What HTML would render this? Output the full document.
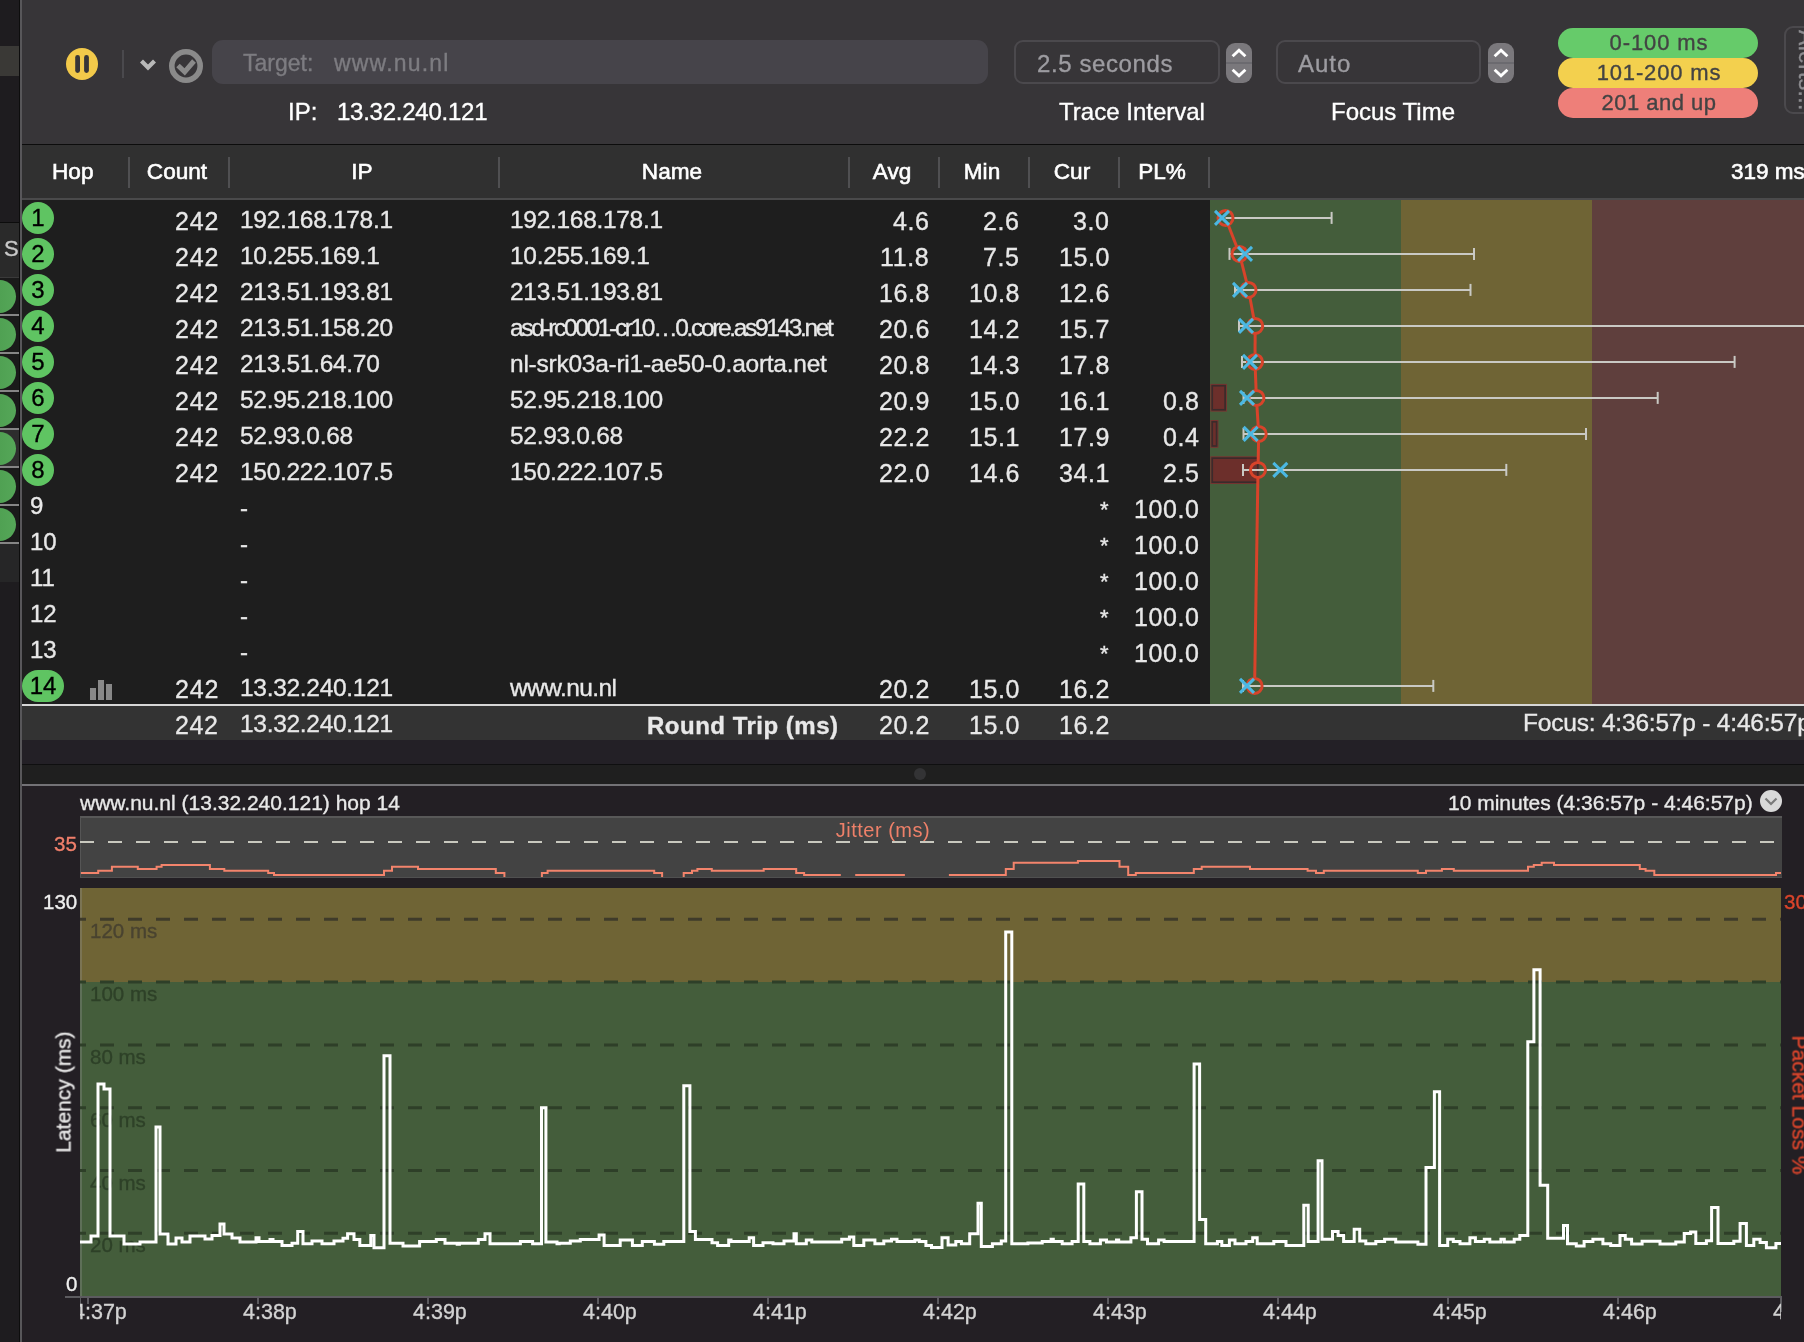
<!DOCTYPE html>
<html><head><meta charset="utf-8"><title>PingPlotter</title>
<style>
html,body{margin:0;padding:0;}
body{width:1804px;height:1342px;position:relative;overflow:hidden;background:#1e1c1f;font-family:"Liberation Sans", sans-serif;}
.r{position:absolute;}
.t{position:absolute;white-space:nowrap;line-height:1;-webkit-text-stroke-width:0.35px;will-change:transform;}
svg{position:absolute;}
</style></head><body>
<div class="r" style="left:0px;top:0px;width:19px;height:1342px;background:#1e1c1f;"></div>
<div class="r" style="left:0px;top:46px;width:19px;height:30px;background:#3a3936;"></div>
<div class="r" style="left:0px;top:222px;width:19px;height:1px;background:#0c0c0c;"></div>
<div class="r" style="left:0px;top:223px;width:19px;height:54px;background:#2a2a2a;"></div>
<div class="r" style="left:0px;top:276.5px;width:19px;height:1.5px;background:#3a3a3a;"></div>
<div class="r" style="left:0px;top:278px;width:19px;height:265px;background:#1a1a1a;"></div>
<div class="r" style="left:0px;top:429px;width:19px;height:38px;background:#2d2d2d;"></div>
<div class="r" style="left:0px;top:543px;width:19px;height:39px;background:#262627;"></div>
<div class="r" style="left:-18px;top:279.7px;width:33.6px;height:33.6px;border-radius:50%;background:linear-gradient(90deg,#4a9a4d,#55a758);"></div>
<div class="r" style="left:0px;top:314px;width:19px;height:1.6px;background:#858585;"></div>
<div class="r" style="left:-18px;top:317.7px;width:33.6px;height:33.6px;border-radius:50%;background:linear-gradient(90deg,#4a9a4d,#55a758);"></div>
<div class="r" style="left:0px;top:352px;width:19px;height:1.6px;background:#858585;"></div>
<div class="r" style="left:-18px;top:355.7px;width:33.6px;height:33.6px;border-radius:50%;background:linear-gradient(90deg,#4a9a4d,#55a758);"></div>
<div class="r" style="left:0px;top:390px;width:19px;height:1.6px;background:#858585;"></div>
<div class="r" style="left:-18px;top:393.7px;width:33.6px;height:33.6px;border-radius:50%;background:linear-gradient(90deg,#4a9a4d,#55a758);"></div>
<div class="r" style="left:0px;top:428px;width:19px;height:1.6px;background:#858585;"></div>
<div class="r" style="left:-18px;top:431.7px;width:33.6px;height:33.6px;border-radius:50%;background:linear-gradient(90deg,#4a9a4d,#55a758);"></div>
<div class="r" style="left:0px;top:466px;width:19px;height:1.6px;background:#858585;"></div>
<div class="r" style="left:-18px;top:469.7px;width:33.6px;height:33.6px;border-radius:50%;background:linear-gradient(90deg,#4a9a4d,#55a758);"></div>
<div class="r" style="left:0px;top:504px;width:19px;height:1.6px;background:#858585;"></div>
<div class="r" style="left:-18px;top:507.7px;width:33.6px;height:33.6px;border-radius:50%;background:linear-gradient(90deg,#4a9a4d,#55a758);"></div>
<div class="r" style="left:0px;top:542px;width:19px;height:1.6px;background:#858585;"></div>
<div class="t" style="left:4px;top:238px;font-size:22px;color:#c8c8c8;">S</div>
<div class="r" style="left:19px;top:0px;width:1px;height:1342px;background:#0d0d0d;"></div>
<div class="r" style="left:20px;top:0px;width:2px;height:1342px;background:#58575a;"></div>
<div class="r" style="left:22px;top:0px;width:1782px;height:144px;background:#373538;"></div>
<div class="r" style="left:22px;top:143.5px;width:1782px;height:1.8px;background:#0c0c0c;"></div>
<svg style="left:60px;top:42px" width="44" height="44" viewBox="0 0 44 44"><circle cx="22" cy="22" r="16" fill="#f2c94a"/><rect x="15.2" y="13" width="4.8" height="18" rx="2.4" fill="#373538"/><rect x="24.1" y="13" width="4.8" height="18" rx="2.4" fill="#373538"/></svg>
<div class="r" style="left:122px;top:50px;width:2px;height:28px;background:#4a494d;"></div>
<svg style="left:136px;top:54px" width="24" height="20" viewBox="0 0 24 20"><path d="M5.5 7 L12 13.5 L18.5 7" fill="none" stroke="#b8b8b8" stroke-width="4.2" stroke-linecap="butt" stroke-linejoin="miter"/></svg>
<svg style="left:166px;top:46px" width="40" height="40" viewBox="0 0 40 40"><circle cx="20" cy="20" r="14.2" fill="none" stroke="#8a8a8a" stroke-width="5.6"/><path d="M12 19.5 L18.7 25.8 L28 15" fill="none" stroke="#8a8a8a" stroke-width="5"/></svg>
<div class="r" style="left:212px;top:40px;width:776px;height:44px;background:#46444a;border-radius:11px;"></div>
<div class="t" style="top:52.0px;font-size:23px;color:#7d7c81;left:243px;">Target:</div>
<div class="t" style="top:52.0px;font-size:23px;color:#7d7c81;letter-spacing:1.2px;left:334px;">www.nu.nl</div>
<div class="t" style="top:99.7px;font-size:24px;color:#ffffff;left:288px;">IP:</div>
<div class="t" style="top:99.7px;font-size:24px;color:#ffffff;letter-spacing:-0.25px;left:337px;">13.32.240.121</div>
<div class="r" style="left:1014px;top:40px;width:206px;height:44px;background:transparent;box-sizing:border-box;border:2px solid #4b494d;border-radius:9px;"></div>
<div class="t" style="top:51.7px;font-size:24px;color:#9d9ca1;letter-spacing:0.6px;left:1037px;">2.5 seconds</div>
<svg style="left:1226px;top:43px" width="26" height="40" viewBox="0 0 26 40"><rect x="0" y="0" width="26" height="40" rx="9" fill="#7a787c"/><rect x="0" y="19.3" width="26" height="1.4" fill="#66646a"/><path d="M6.6 13.2 L13 7.2 L19.4 13.2" fill="none" stroke="#fff" stroke-width="2.9"/><path d="M6.6 26.8 L13 32.8 L19.4 26.8" fill="none" stroke="#fff" stroke-width="2.9"/></svg>
<div class="t" style="top:99.7px;font-size:24px;color:#ffffff;left:1132px;transform:translateX(-50%);">Trace Interval</div>
<div class="r" style="left:1276px;top:40px;width:205px;height:44px;background:transparent;box-sizing:border-box;border:2px solid #4b494d;border-radius:9px;"></div>
<div class="t" style="top:51.7px;font-size:24px;color:#9d9ca1;letter-spacing:1px;left:1298px;">Auto</div>
<svg style="left:1488px;top:43px" width="26" height="40" viewBox="0 0 26 40"><rect x="0" y="0" width="26" height="40" rx="9" fill="#7a787c"/><rect x="0" y="19.3" width="26" height="1.4" fill="#66646a"/><path d="M6.6 13.2 L13 7.2 L19.4 13.2" fill="none" stroke="#fff" stroke-width="2.9"/><path d="M6.6 26.8 L13 32.8 L19.4 26.8" fill="none" stroke="#fff" stroke-width="2.9"/></svg>
<div class="t" style="top:99.7px;font-size:24px;color:#ffffff;left:1393px;transform:translateX(-50%);">Focus Time</div>
<div class="r" style="left:1558px;top:28px;width:200px;height:30px;background:#66cb6a;border-radius:15px;"></div>
<div class="r" style="left:1558px;top:58px;width:200px;height:30px;background:#f3d04e;border-radius:15px;"></div>
<div class="r" style="left:1558px;top:88px;width:200px;height:30px;background:#ee7f79;border-radius:15px;"></div>
<div class="t" style="top:32.4px;font-size:22px;color:#434343;letter-spacing:0.9px;left:1658.5px;transform:translateX(-50%);">0-100 ms</div>
<div class="t" style="top:62.4px;font-size:22px;color:#434343;letter-spacing:0.85px;left:1658.5px;transform:translateX(-50%);">101-200 ms</div>
<div class="t" style="top:92.4px;font-size:22px;color:#434343;letter-spacing:0.5px;left:1658.5px;transform:translateX(-50%);">201 and up</div>
<div class="r" style="left:1784px;top:26px;width:40px;height:88px;background:transparent;box-sizing:border-box;border:2px solid #4b494d;border-radius:9px;"></div>
<div class="t" style="left:1818px;top:30px;font-size:23px;letter-spacing:0.3px;color:#8d8c90;transform-origin:0 0;transform:rotate(90deg);">Alerts...</div>
<div class="r" style="left:22px;top:145.3px;width:1782px;height:52.7px;background:#303030;"></div>
<div class="r" style="left:22px;top:198px;width:1782px;height:2px;background:#4a4a4b;"></div>
<div class="r" style="left:22px;top:200px;width:1782px;height:504px;background:#1e1e1e;"></div>
<div class="r" style="left:128px;top:156.5px;width:2px;height:31.5px;background:#505052;"></div>
<div class="r" style="left:228px;top:156.5px;width:2px;height:31.5px;background:#505052;"></div>
<div class="r" style="left:498px;top:156.5px;width:2px;height:31.5px;background:#505052;"></div>
<div class="r" style="left:848px;top:156.5px;width:2px;height:31.5px;background:#505052;"></div>
<div class="r" style="left:938px;top:156.5px;width:2px;height:31.5px;background:#505052;"></div>
<div class="r" style="left:1028px;top:156.5px;width:2px;height:31.5px;background:#505052;"></div>
<div class="r" style="left:1118px;top:156.5px;width:2px;height:31.5px;background:#505052;"></div>
<div class="r" style="left:1208px;top:156.5px;width:2px;height:31.5px;background:#505052;"></div>
<div class="t" style="top:161.2px;font-size:22.6px;color:#ffffff;left:52px;-webkit-text-stroke-width:0.6px;">Hop</div>
<div class="t" style="top:161.2px;font-size:22.6px;color:#ffffff;left:177px;transform:translateX(-50%);-webkit-text-stroke-width:0.6px;">Count</div>
<div class="t" style="top:161.2px;font-size:22.6px;color:#ffffff;left:362px;transform:translateX(-50%);-webkit-text-stroke-width:0.6px;">IP</div>
<div class="t" style="top:161.2px;font-size:22.6px;color:#ffffff;left:672px;transform:translateX(-50%);-webkit-text-stroke-width:0.6px;">Name</div>
<div class="t" style="top:161.2px;font-size:22.6px;color:#ffffff;left:892px;transform:translateX(-50%);-webkit-text-stroke-width:0.6px;">Avg</div>
<div class="t" style="top:161.2px;font-size:22.6px;color:#ffffff;left:982px;transform:translateX(-50%);-webkit-text-stroke-width:0.6px;">Min</div>
<div class="t" style="top:161.2px;font-size:22.6px;color:#ffffff;left:1072px;transform:translateX(-50%);-webkit-text-stroke-width:0.6px;">Cur</div>
<div class="t" style="top:161.2px;font-size:22.6px;color:#ffffff;left:1162px;transform:translateX(-50%);-webkit-text-stroke-width:0.6px;">PL%</div>
<div class="t" style="top:161.3px;font-size:22.5px;color:#ffffff;left:1730.5px;-webkit-text-stroke-width:0.6px;">319 ms</div>
<div class="r" style="left:22px;top:202px;width:32px;height:32px;border-radius:16px;background:#5fc462;"></div>
<div class="t" style="top:206.3px;font-size:24px;color:#000000;left:38.0px;transform:translateX(-50%);">1</div>
<div class="t" style="top:208.8px;font-size:25px;color:#e8e8e8;letter-spacing:0.8px;right:1584.7px;">242</div>
<div class="t" style="top:207.6px;font-size:24.5px;color:#e8e8e8;letter-spacing:-0.3px;left:240px;">192.168.178.1</div>
<div class="t" style="top:207.6px;font-size:24.5px;color:#e8e8e8;letter-spacing:-0.3px;left:510px;">192.168.178.1</div>
<div class="t" style="top:208.8px;font-size:25px;color:#e8e8e8;letter-spacing:0.6px;right:874.4px;">4.6</div>
<div class="t" style="top:208.8px;font-size:25px;color:#e8e8e8;letter-spacing:0.6px;right:784.4px;">2.6</div>
<div class="t" style="top:208.8px;font-size:25px;color:#e8e8e8;letter-spacing:0.6px;right:694.4px;">3.0</div>
<div class="r" style="left:22px;top:238px;width:32px;height:32px;border-radius:16px;background:#5fc462;"></div>
<div class="t" style="top:242.3px;font-size:24px;color:#000000;left:38.0px;transform:translateX(-50%);">2</div>
<div class="t" style="top:244.8px;font-size:25px;color:#e8e8e8;letter-spacing:0.8px;right:1584.7px;">242</div>
<div class="t" style="top:243.6px;font-size:24.5px;color:#e8e8e8;letter-spacing:-0.3px;left:240px;">10.255.169.1</div>
<div class="t" style="top:243.6px;font-size:24.5px;color:#e8e8e8;letter-spacing:-0.3px;left:510px;">10.255.169.1</div>
<div class="t" style="top:244.8px;font-size:25px;color:#e8e8e8;letter-spacing:0.6px;right:874.4px;">11.8</div>
<div class="t" style="top:244.8px;font-size:25px;color:#e8e8e8;letter-spacing:0.6px;right:784.4px;">7.5</div>
<div class="t" style="top:244.8px;font-size:25px;color:#e8e8e8;letter-spacing:0.6px;right:694.4px;">15.0</div>
<div class="r" style="left:22px;top:274px;width:32px;height:32px;border-radius:16px;background:#5fc462;"></div>
<div class="t" style="top:278.3px;font-size:24px;color:#000000;left:38.0px;transform:translateX(-50%);">3</div>
<div class="t" style="top:280.8px;font-size:25px;color:#e8e8e8;letter-spacing:0.8px;right:1584.7px;">242</div>
<div class="t" style="top:279.6px;font-size:24.5px;color:#e8e8e8;letter-spacing:-0.3px;left:240px;">213.51.193.81</div>
<div class="t" style="top:279.6px;font-size:24.5px;color:#e8e8e8;letter-spacing:-0.3px;left:510px;">213.51.193.81</div>
<div class="t" style="top:280.8px;font-size:25px;color:#e8e8e8;letter-spacing:0.6px;right:874.4px;">16.8</div>
<div class="t" style="top:280.8px;font-size:25px;color:#e8e8e8;letter-spacing:0.6px;right:784.4px;">10.8</div>
<div class="t" style="top:280.8px;font-size:25px;color:#e8e8e8;letter-spacing:0.6px;right:694.4px;">12.6</div>
<div class="r" style="left:22px;top:310px;width:32px;height:32px;border-radius:16px;background:#5fc462;"></div>
<div class="t" style="top:314.3px;font-size:24px;color:#000000;left:38.0px;transform:translateX(-50%);">4</div>
<div class="t" style="top:316.8px;font-size:25px;color:#e8e8e8;letter-spacing:0.8px;right:1584.7px;">242</div>
<div class="t" style="top:315.6px;font-size:24.5px;color:#e8e8e8;letter-spacing:-0.3px;left:240px;">213.51.158.20</div>
<div class="t" style="top:315.6px;font-size:24.5px;color:#e8e8e8;letter-spacing:-2.35px;left:510px;">asd-rc0001-cr10…0.core.as9143.net</div>
<div class="t" style="top:316.8px;font-size:25px;color:#e8e8e8;letter-spacing:0.6px;right:874.4px;">20.6</div>
<div class="t" style="top:316.8px;font-size:25px;color:#e8e8e8;letter-spacing:0.6px;right:784.4px;">14.2</div>
<div class="t" style="top:316.8px;font-size:25px;color:#e8e8e8;letter-spacing:0.6px;right:694.4px;">15.7</div>
<div class="r" style="left:22px;top:346px;width:32px;height:32px;border-radius:16px;background:#5fc462;"></div>
<div class="t" style="top:350.3px;font-size:24px;color:#000000;left:38.0px;transform:translateX(-50%);">5</div>
<div class="t" style="top:352.8px;font-size:25px;color:#e8e8e8;letter-spacing:0.8px;right:1584.7px;">242</div>
<div class="t" style="top:351.6px;font-size:24.5px;color:#e8e8e8;letter-spacing:-0.3px;left:240px;">213.51.64.70</div>
<div class="t" style="top:351.6px;font-size:24.5px;color:#e8e8e8;letter-spacing:-0.25px;left:510px;">nl-srk03a-ri1-ae50-0.aorta.net</div>
<div class="t" style="top:352.8px;font-size:25px;color:#e8e8e8;letter-spacing:0.6px;right:874.4px;">20.8</div>
<div class="t" style="top:352.8px;font-size:25px;color:#e8e8e8;letter-spacing:0.6px;right:784.4px;">14.3</div>
<div class="t" style="top:352.8px;font-size:25px;color:#e8e8e8;letter-spacing:0.6px;right:694.4px;">17.8</div>
<div class="r" style="left:22px;top:382px;width:32px;height:32px;border-radius:16px;background:#5fc462;"></div>
<div class="t" style="top:386.3px;font-size:24px;color:#000000;left:38.0px;transform:translateX(-50%);">6</div>
<div class="t" style="top:388.8px;font-size:25px;color:#e8e8e8;letter-spacing:0.8px;right:1584.7px;">242</div>
<div class="t" style="top:387.6px;font-size:24.5px;color:#e8e8e8;letter-spacing:-0.3px;left:240px;">52.95.218.100</div>
<div class="t" style="top:387.6px;font-size:24.5px;color:#e8e8e8;letter-spacing:-0.3px;left:510px;">52.95.218.100</div>
<div class="t" style="top:388.8px;font-size:25px;color:#e8e8e8;letter-spacing:0.6px;right:874.4px;">20.9</div>
<div class="t" style="top:388.8px;font-size:25px;color:#e8e8e8;letter-spacing:0.6px;right:784.4px;">15.0</div>
<div class="t" style="top:388.8px;font-size:25px;color:#e8e8e8;letter-spacing:0.6px;right:694.4px;">16.1</div>
<div class="t" style="top:388.8px;font-size:25px;color:#e8e8e8;letter-spacing:0.6px;right:604.4px;">0.8</div>
<div class="r" style="left:22px;top:418px;width:32px;height:32px;border-radius:16px;background:#5fc462;"></div>
<div class="t" style="top:422.3px;font-size:24px;color:#000000;left:38.0px;transform:translateX(-50%);">7</div>
<div class="t" style="top:424.8px;font-size:25px;color:#e8e8e8;letter-spacing:0.8px;right:1584.7px;">242</div>
<div class="t" style="top:423.6px;font-size:24.5px;color:#e8e8e8;letter-spacing:-0.3px;left:240px;">52.93.0.68</div>
<div class="t" style="top:423.6px;font-size:24.5px;color:#e8e8e8;letter-spacing:-0.3px;left:510px;">52.93.0.68</div>
<div class="t" style="top:424.8px;font-size:25px;color:#e8e8e8;letter-spacing:0.6px;right:874.4px;">22.2</div>
<div class="t" style="top:424.8px;font-size:25px;color:#e8e8e8;letter-spacing:0.6px;right:784.4px;">15.1</div>
<div class="t" style="top:424.8px;font-size:25px;color:#e8e8e8;letter-spacing:0.6px;right:694.4px;">17.9</div>
<div class="t" style="top:424.8px;font-size:25px;color:#e8e8e8;letter-spacing:0.6px;right:604.4px;">0.4</div>
<div class="r" style="left:22px;top:454px;width:32px;height:32px;border-radius:16px;background:#5fc462;"></div>
<div class="t" style="top:458.3px;font-size:24px;color:#000000;left:38.0px;transform:translateX(-50%);">8</div>
<div class="t" style="top:460.8px;font-size:25px;color:#e8e8e8;letter-spacing:0.8px;right:1584.7px;">242</div>
<div class="t" style="top:459.6px;font-size:24.5px;color:#e8e8e8;letter-spacing:-0.3px;left:240px;">150.222.107.5</div>
<div class="t" style="top:459.6px;font-size:24.5px;color:#e8e8e8;letter-spacing:-0.3px;left:510px;">150.222.107.5</div>
<div class="t" style="top:460.8px;font-size:25px;color:#e8e8e8;letter-spacing:0.6px;right:874.4px;">22.0</div>
<div class="t" style="top:460.8px;font-size:25px;color:#e8e8e8;letter-spacing:0.6px;right:784.4px;">14.6</div>
<div class="t" style="top:460.8px;font-size:25px;color:#e8e8e8;letter-spacing:0.6px;right:694.4px;">34.1</div>
<div class="t" style="top:460.8px;font-size:25px;color:#e8e8e8;letter-spacing:0.6px;right:604.4px;">2.5</div>
<div class="t" style="top:494.3px;font-size:24px;color:#e8e8e8;left:30px;">9</div>
<div class="t" style="top:496.0px;font-size:24px;color:#e8e8e8;left:240px;">-</div>
<div class="t" style="top:498.9px;font-size:22px;color:#e8e8e8;right:695px;">*</div>
<div class="t" style="top:496.8px;font-size:25px;color:#e8e8e8;letter-spacing:0.6px;right:604.4px;">100.0</div>
<div class="t" style="top:530.3px;font-size:24px;color:#e8e8e8;left:30px;">10</div>
<div class="t" style="top:532.0px;font-size:24px;color:#e8e8e8;left:240px;">-</div>
<div class="t" style="top:534.9px;font-size:22px;color:#e8e8e8;right:695px;">*</div>
<div class="t" style="top:532.8px;font-size:25px;color:#e8e8e8;letter-spacing:0.6px;right:604.4px;">100.0</div>
<div class="t" style="top:566.3px;font-size:24px;color:#e8e8e8;left:30px;">11</div>
<div class="t" style="top:568.0px;font-size:24px;color:#e8e8e8;left:240px;">-</div>
<div class="t" style="top:570.9px;font-size:22px;color:#e8e8e8;right:695px;">*</div>
<div class="t" style="top:568.8px;font-size:25px;color:#e8e8e8;letter-spacing:0.6px;right:604.4px;">100.0</div>
<div class="t" style="top:602.3px;font-size:24px;color:#e8e8e8;left:30px;">12</div>
<div class="t" style="top:604.0px;font-size:24px;color:#e8e8e8;left:240px;">-</div>
<div class="t" style="top:606.9px;font-size:22px;color:#e8e8e8;right:695px;">*</div>
<div class="t" style="top:604.8px;font-size:25px;color:#e8e8e8;letter-spacing:0.6px;right:604.4px;">100.0</div>
<div class="t" style="top:638.3px;font-size:24px;color:#e8e8e8;left:30px;">13</div>
<div class="t" style="top:640.0px;font-size:24px;color:#e8e8e8;left:240px;">-</div>
<div class="t" style="top:642.9px;font-size:22px;color:#e8e8e8;right:695px;">*</div>
<div class="t" style="top:640.8px;font-size:25px;color:#e8e8e8;letter-spacing:0.6px;right:604.4px;">100.0</div>
<div class="r" style="left:22px;top:670px;width:42px;height:32px;border-radius:16px;background:#5fc462;"></div>
<div class="t" style="top:674.3px;font-size:24px;color:#000000;left:43.0px;transform:translateX(-50%);">14</div>
<div class="t" style="top:676.8px;font-size:25px;color:#e8e8e8;letter-spacing:0.8px;right:1584.7px;">242</div>
<div class="t" style="top:675.6px;font-size:24.5px;color:#e8e8e8;letter-spacing:-0.3px;left:240px;">13.32.240.121</div>
<div class="t" style="top:675.6px;font-size:24.5px;color:#e8e8e8;letter-spacing:-0.6px;left:510px;">www.nu.nl</div>
<div class="t" style="top:676.8px;font-size:25px;color:#e8e8e8;letter-spacing:0.6px;right:874.4px;">20.2</div>
<div class="t" style="top:676.8px;font-size:25px;color:#e8e8e8;letter-spacing:0.6px;right:784.4px;">15.0</div>
<div class="t" style="top:676.8px;font-size:25px;color:#e8e8e8;letter-spacing:0.6px;right:694.4px;">16.2</div>
<div class="r" style="left:89.8px;top:688px;width:6px;height:12px;background:#888888;"></div>
<div class="r" style="left:98.2px;top:680px;width:6px;height:20px;background:#888888;"></div>
<div class="r" style="left:106.2px;top:684px;width:6px;height:16px;background:#888888;"></div>
<div class="r" style="left:1210px;top:200px;width:191px;height:504px;background:#445d3b;"></div>
<div class="r" style="left:1401px;top:200px;width:191px;height:504px;background:#6f6435;"></div>
<div class="r" style="left:1592px;top:200px;width:212px;height:504px;background:#5f3f3d;"></div>
<svg style="left:0;top:0" width="1804" height="1342" viewBox="0 0 1804 1342"><rect x="1210.4" y="383.9" width="16.5" height="27.7" fill="#773430"/><rect x="1212.2" y="385.7" width="12.9" height="24.1" fill="#6c2f2b" stroke="#3b2b2b" stroke-width="1.7"/><rect x="1210.4" y="420" width="8.0" height="27.8" fill="#773430"/><rect x="1212.2" y="421.8" width="4.4" height="24.2" fill="#6c2f2b" stroke="#3b2b2b" stroke-width="1.7"/><rect x="1210.4" y="456.3" width="49.2" height="27.7" fill="#773430"/><rect x="1212.2" y="458.1" width="45.6" height="24.1" fill="#6c2f2b" stroke="#3b2b2b" stroke-width="1.7"/><line x1="1225.5" y1="217.9" x2="1331.6" y2="217.9" stroke="#c9c9c4" stroke-width="2"/><line x1="1331.6" y1="211.9" x2="1331.6" y2="223.9" stroke="#c9c9c4" stroke-width="2"/><line x1="1229.5" y1="253.9" x2="1474" y2="253.9" stroke="#c9c9c4" stroke-width="2"/><line x1="1229.5" y1="247.9" x2="1229.5" y2="259.9" stroke="#c9c9c4" stroke-width="2"/><line x1="1474" y1="247.9" x2="1474" y2="259.9" stroke="#c9c9c4" stroke-width="2"/><line x1="1235" y1="289.9" x2="1470.5" y2="289.9" stroke="#c9c9c4" stroke-width="2"/><line x1="1235" y1="283.9" x2="1235" y2="295.9" stroke="#c9c9c4" stroke-width="2"/><line x1="1470.5" y1="283.9" x2="1470.5" y2="295.9" stroke="#c9c9c4" stroke-width="2"/><line x1="1239" y1="325.9" x2="1810" y2="325.9" stroke="#c9c9c4" stroke-width="2"/><line x1="1239" y1="319.9" x2="1239" y2="331.9" stroke="#c9c9c4" stroke-width="2"/><line x1="1810" y1="319.9" x2="1810" y2="331.9" stroke="#c9c9c4" stroke-width="2"/><line x1="1242" y1="361.9" x2="1734.6" y2="361.9" stroke="#c9c9c4" stroke-width="2"/><line x1="1242" y1="355.9" x2="1242" y2="367.9" stroke="#c9c9c4" stroke-width="2"/><line x1="1734.6" y1="355.9" x2="1734.6" y2="367.9" stroke="#c9c9c4" stroke-width="2"/><line x1="1243.5" y1="397.9" x2="1657.7" y2="397.9" stroke="#c9c9c4" stroke-width="2"/><line x1="1243.5" y1="391.9" x2="1243.5" y2="403.9" stroke="#c9c9c4" stroke-width="2"/><line x1="1657.7" y1="391.9" x2="1657.7" y2="403.9" stroke="#c9c9c4" stroke-width="2"/><line x1="1243.5" y1="433.9" x2="1586" y2="433.9" stroke="#c9c9c4" stroke-width="2"/><line x1="1243.5" y1="427.9" x2="1243.5" y2="439.9" stroke="#c9c9c4" stroke-width="2"/><line x1="1586" y1="427.9" x2="1586" y2="439.9" stroke="#c9c9c4" stroke-width="2"/><line x1="1243" y1="469.9" x2="1506.3" y2="469.9" stroke="#c9c9c4" stroke-width="2"/><line x1="1243" y1="463.9" x2="1243" y2="475.9" stroke="#c9c9c4" stroke-width="2"/><line x1="1506.3" y1="463.9" x2="1506.3" y2="475.9" stroke="#c9c9c4" stroke-width="2"/><line x1="1243" y1="685.9" x2="1433.3" y2="685.9" stroke="#c9c9c4" stroke-width="2"/><line x1="1243" y1="679.9" x2="1243" y2="691.9" stroke="#c9c9c4" stroke-width="2"/><line x1="1433.3" y1="679.9" x2="1433.3" y2="691.9" stroke="#c9c9c4" stroke-width="2"/><line x1="1228.47" y1="225.54" x2="1236.53" y2="246.26" stroke="#d8432a" stroke-width="3"/><line x1="1241.49" y1="261.86" x2="1246.51" y2="281.94" stroke="#d8432a" stroke-width="3"/><line x1="1250.00" y1="297.96" x2="1253.70" y2="317.84" stroke="#d8432a" stroke-width="3"/><line x1="1255.15" y1="334.10" x2="1255.05" y2="353.70" stroke="#d8432a" stroke-width="3"/><line x1="1255.32" y1="370.09" x2="1256.08" y2="389.71" stroke="#d8432a" stroke-width="3"/><line x1="1256.92" y1="406.08" x2="1258.18" y2="425.72" stroke="#d8432a" stroke-width="3"/><line x1="1258.54" y1="442.10" x2="1258.16" y2="461.70" stroke="#d8432a" stroke-width="3"/><line x1="1257.87" y1="478.10" x2="1254.73" y2="677.70" stroke="#d8432a" stroke-width="3"/><circle cx="1225.5" cy="217.9" r="7.5" fill="none" stroke="#d8432a" stroke-width="3"/><circle cx="1239.5" cy="253.9" r="7.5" fill="none" stroke="#d8432a" stroke-width="3"/><circle cx="1248.5" cy="289.9" r="7.5" fill="none" stroke="#d8432a" stroke-width="3"/><circle cx="1255.2" cy="325.9" r="7.5" fill="none" stroke="#d8432a" stroke-width="3"/><circle cx="1255" cy="361.9" r="7.5" fill="none" stroke="#d8432a" stroke-width="3"/><circle cx="1256.4" cy="397.9" r="7.5" fill="none" stroke="#d8432a" stroke-width="3"/><circle cx="1258.7" cy="433.9" r="7.5" fill="none" stroke="#d8432a" stroke-width="3"/><circle cx="1258" cy="469.9" r="7.5" fill="none" stroke="#d8432a" stroke-width="3"/><circle cx="1254.6" cy="685.9" r="7.5" fill="none" stroke="#d8432a" stroke-width="3"/><path d="M1215 210.9 L1229 224.9 M1215 224.9 L1229 210.9" stroke="#4bb8e3" stroke-width="3"/><path d="M1238 246.9 L1252 260.9 M1238 260.9 L1252 246.9" stroke="#4bb8e3" stroke-width="3"/><path d="M1233 282.9 L1247 296.9 M1233 296.9 L1247 282.9" stroke="#4bb8e3" stroke-width="3"/><path d="M1239 318.9 L1253 332.9 M1239 332.9 L1253 318.9" stroke="#4bb8e3" stroke-width="3"/><path d="M1243 354.9 L1257 368.9 M1243 368.9 L1257 354.9" stroke="#4bb8e3" stroke-width="3"/><path d="M1240 390.9 L1254 404.9 M1240 404.9 L1254 390.9" stroke="#4bb8e3" stroke-width="3"/><path d="M1243.6 426.9 L1257.6 440.9 M1243.6 440.9 L1257.6 426.9" stroke="#4bb8e3" stroke-width="3"/><path d="M1273.3 462.9 L1287.3 476.9 M1273.3 476.9 L1287.3 462.9" stroke="#4bb8e3" stroke-width="3"/><path d="M1240 678.9 L1254 692.9 M1240 692.9 L1254 678.9" stroke="#4bb8e3" stroke-width="3"/></svg>
<div class="r" style="left:22px;top:704px;width:1782px;height:2px;background:#d6d6d6;"></div>
<div class="r" style="left:22px;top:706px;width:1782px;height:34px;background:#333333;"></div>
<div class="t" style="top:712.8px;font-size:25px;color:#e8e8e8;letter-spacing:0.6px;right:1585.4px;">242</div>
<div class="t" style="top:711.6px;font-size:24.5px;color:#e8e8e8;letter-spacing:-0.3px;left:240px;">13.32.240.121</div>
<div class="t" style="top:713.7px;font-size:24px;color:#e8e8e8;font-weight:bold;letter-spacing:0.5px;right:965.5px;">Round Trip (ms)</div>
<div class="t" style="top:712.8px;font-size:25px;color:#e8e8e8;letter-spacing:0.6px;right:874.4px;">20.2</div>
<div class="t" style="top:712.8px;font-size:25px;color:#e8e8e8;letter-spacing:0.6px;right:784.4px;">15.0</div>
<div class="t" style="top:712.8px;font-size:25px;color:#e8e8e8;letter-spacing:0.6px;right:694.4px;">16.2</div>
<div class="t" style="top:711.3px;font-size:24.5px;color:#e8e8e8;letter-spacing:-0.2px;left:1523px;">Focus: 4:36:57p - 4:46:57p</div>
<div class="r" style="left:22px;top:740px;width:1782px;height:24px;background:#232026;"></div>
<div class="r" style="left:22px;top:764px;width:1782px;height:1px;background:#0f0f10;"></div>
<div class="r" style="left:22px;top:765px;width:1782px;height:19px;background:#1f1f1f;"></div>
<div class="r" style="left:914px;top:768px;width:12px;height:12px;border-radius:6px;background:#333335;"></div>
<div class="r" style="left:22px;top:784px;width:1782px;height:2px;background:#737276;"></div>
<div class="r" style="left:22px;top:786px;width:1782px;height:556px;background:#231f24;"></div>
<div class="t" style="top:792.2px;font-size:21px;color:#e8e8e8;left:80px;">www.nu.nl (13.32.240.121) hop 14</div>
<div class="t" style="top:792.2px;font-size:21px;color:#e8e8e8;right:51px;">10 minutes (4:36:57p - 4:46:57p)</div>
<svg style="left:1759px;top:789px" width="24" height="24" viewBox="0 0 24 24"><circle cx="12" cy="12" r="11" fill="#d9d9d9"/><path d="M6.5 9.5 L12 15 L17.5 9.5" fill="none" stroke="#7a7a7a" stroke-width="2.2"/></svg>
<div class="r" style="left:80px;top:816px;width:1702px;height:62px;background:#434343;box-sizing:border-box;border-top:2px solid #585858;border-left:1px solid #555;border-bottom:1px solid #505050;"></div>
<div class="t" style="top:833.6px;font-size:20.5px;color:#f07f6b;right:1727px;">35</div>
<div class="t" style="top:819.6px;font-size:20px;color:#ee8069;letter-spacing:0.5px;left:883px;transform:translateX(-50%);-webkit-text-stroke-width:0;">Jitter (ms)</div>
<div class="r" style="left:80px;top:888px;width:1701px;height:94px;background:#6f6435;"></div>
<div class="r" style="left:80px;top:982px;width:1701px;height:314px;background:#445d3b;"></div>
<div class="r" style="left:80px;top:888px;width:2px;height:408px;background:rgba(150,150,150,0.33);"></div>
<div class="t" style="top:892.1px;font-size:20.5px;color:#eeeeee;right:1727px;">130</div>
<div class="t" style="top:1273.6px;font-size:20.5px;color:#eeeeee;right:1727px;">0</div>
<div class="t" style="top:892.1px;font-size:20.5px;color:#d9442b;left:1783.5px;">30</div>
<div class="t" style="left:63px;top:1091.5px;font-size:21px;color:#e8e8e8;transform:translate(-50%,-50%) rotate(-90deg);">Latency (ms)</div>
<div class="t" style="left:1800px;top:1104.6px;font-size:21px;color:#d9442b;transform:translate(-50%,-50%) rotate(90deg);">Packet Loss %</div>
<div class="t" style="top:921.4px;font-size:20.5px;color:#494330;left:89.8px;">120 ms</div>
<div class="t" style="top:984.1px;font-size:20.5px;color:#2e4128;left:89.8px;">100 ms</div>
<div class="t" style="top:1046.9px;font-size:20.5px;color:#2e4128;left:89.8px;">80 ms</div>
<div class="t" style="top:1109.7px;font-size:20.5px;color:#2e4128;left:89.8px;">60 ms</div>
<div class="t" style="top:1172.5px;font-size:20.5px;color:#2e4128;left:89.8px;">40 ms</div>
<div class="t" style="top:1235.3px;font-size:20.5px;color:#2e4128;left:89.8px;">20 ms</div>
<div class="r" style="left:65px;top:1296px;width:1717px;height:2px;background:#5c5b5f;"></div>
<div class="r" style="left:87px;top:1298px;width:2px;height:6px;background:#5c5b5f;"></div>
<div class="r" style="left:257px;top:1298px;width:2px;height:6px;background:#5c5b5f;"></div>
<div class="r" style="left:427px;top:1298px;width:2px;height:6px;background:#5c5b5f;"></div>
<div class="r" style="left:597px;top:1298px;width:2px;height:6px;background:#5c5b5f;"></div>
<div class="r" style="left:767px;top:1298px;width:2px;height:6px;background:#5c5b5f;"></div>
<div class="r" style="left:937px;top:1298px;width:2px;height:6px;background:#5c5b5f;"></div>
<div class="r" style="left:1107px;top:1298px;width:2px;height:6px;background:#5c5b5f;"></div>
<div class="r" style="left:1277px;top:1298px;width:2px;height:6px;background:#5c5b5f;"></div>
<div class="r" style="left:1447px;top:1298px;width:2px;height:6px;background:#5c5b5f;"></div>
<div class="r" style="left:1617px;top:1298px;width:2px;height:6px;background:#5c5b5f;"></div>
<div class="r" style="left:80px;top:1298px;width:1px;height:6px;background:#5c5b5f;"></div>
<div class="r" style="left:1780px;top:1298px;width:2px;height:14px;background:#5c5b5f;"></div>
<div class="r" style="left:80px;top:1298px;width:1701px;height:44px;overflow:hidden;">
<div class="t" style="top:3.8px;font-size:21.5px;color:#d2d2d2;left:-7.2px;">4:37p</div>
<div class="t" style="top:3.8px;font-size:21.5px;color:#d2d2d2;left:162.8px;">4:38p</div>
<div class="t" style="top:3.8px;font-size:21.5px;color:#d2d2d2;left:332.8px;">4:39p</div>
<div class="t" style="top:3.8px;font-size:21.5px;color:#d2d2d2;left:502.8px;">4:40p</div>
<div class="t" style="top:3.8px;font-size:21.5px;color:#d2d2d2;left:672.8px;">4:41p</div>
<div class="t" style="top:3.8px;font-size:21.5px;color:#d2d2d2;left:842.8px;">4:42p</div>
<div class="t" style="top:3.8px;font-size:21.5px;color:#d2d2d2;left:1012.8px;">4:43p</div>
<div class="t" style="top:3.8px;font-size:21.5px;color:#d2d2d2;left:1182.8px;">4:44p</div>
<div class="t" style="top:3.8px;font-size:21.5px;color:#d2d2d2;left:1352.8px;">4:45p</div>
<div class="t" style="top:3.8px;font-size:21.5px;color:#d2d2d2;left:1522.8px;">4:46p</div>
<div class="t" style="top:3.8px;font-size:21.5px;color:#d2d2d2;left:1693px;">4:47p</div>
</div>
<svg style="left:0;top:0" width="1804" height="1342" viewBox="0 0 1804 1342"><line x1="80" y1="842" x2="1781" y2="842" stroke="#c9c9bf" stroke-width="2.2" stroke-dasharray="14 14"/><line x1="80" y1="919.3" x2="1781" y2="919.3" stroke="#3f3b2a" stroke-width="3" stroke-dasharray="14 14" stroke-dashoffset="8"/><line x1="80" y1="982.1" x2="1781" y2="982.1" stroke="#2e3f28" stroke-width="3" stroke-dasharray="14 14" stroke-dashoffset="8"/><line x1="80" y1="1044.9" x2="1781" y2="1044.9" stroke="#2e3f28" stroke-width="3" stroke-dasharray="14 14" stroke-dashoffset="8"/><line x1="80" y1="1107.7" x2="1781" y2="1107.7" stroke="#2e3f28" stroke-width="3" stroke-dasharray="14 14" stroke-dashoffset="8"/><line x1="80" y1="1170.4" x2="1781" y2="1170.4" stroke="#2e3f28" stroke-width="3" stroke-dasharray="14 14" stroke-dashoffset="8"/><line x1="80" y1="1233.2" x2="1781" y2="1233.2" stroke="#2e3f28" stroke-width="3" stroke-dasharray="14 14" stroke-dashoffset="8"/><path d="M80.9 872.9H98.2V870.8H111.9V866.7H137.8V868.9H156.6V866.7H161.6V864.9H209.9V868.9H224.3V870.8H268.2V872.9H274V875H384V870.8H392V866.7H418V868.9H495.8V872.9H504.4V877H504.4M541.9 877H541.9V872.9H547.6V870.8H654.2V872.9H662.1V877H662.1M683.7 877H683.7V872.9H692V870.8H697.4V868.9H711.8V870.8H763.7V868.9H796.2V872.9H804.1V875H840.8M855.2 875H904.9M948.9 875H1005.8V868.9H1013.7V862.8H1077.9V861H1119.5V866.7H1128.2V875H1135.8V872.9H1193.8V868.9H1201.7V866.7H1250V868.9H1307.6V870.8H1316V872.9H1323.8V870.8H1417.8V872.9H1426V870.8H1441.9V868.9H1453.8V870.8H1528V866.7H1533.8V864.9H1541.7V862.8H1554V864.9H1639.8V868.9H1645.6V870.8H1654.3V875H1776V872.9H1781" fill="none" stroke="#f3846c" stroke-width="2"/><path d="M80 1241.9H91V1235.9H98V1084H104V1089H110V1236H124V1244H140V1242H156V1127H160V1234H168V1244H176V1238H182V1242H190V1236H205V1239H212V1235.4H220V1224H224V1234H232V1238H240V1242H256V1237.7H259V1241.6H270V1239.4H273V1241.6H282V1245.5H292V1243.2H297.7V1231.6H303V1243.8H312V1241H322V1243.8H334V1241H343V1238.2H347.6V1233.8H354V1239.4H359.8V1245.5H370.8V1235.5H374V1247.7H384V1055.8H390V1243.2H403V1246H419.6V1241.6H436.3V1239.4H445V1243.2H457.2V1244.3H459.4V1243.2H478.3V1239.4H485V1233.8H490V1243.8H520.4V1241.6H532.6V1243.8H541.5V1107.8H545.9V1242.1H557V1243.8H559.2V1243.2H570.3V1241H580.3V1239.4H599.1V1234.9H604.1V1245.5H620.2V1240H632.4V1245.5H642.3V1241.6H654.4V1244.3H663.8V1241.6H683.8V1085.8H689.9V1231.6H695.4V1239.4H712V1242.7H717.6V1245.5H728.7V1240H731V1241.6H749.2V1237.7H753.6V1245.5H763V1242.7H773V1243.8H784V1241H794V1233.8H796.3V1243.8H806.3V1240H811.8V1242.1H841.7V1239.3H849.4V1237.1H853.8V1245.4H863.8V1239.9H874.9V1243.8H883.8V1241H891.5V1239.3H897V1241.5H914.8V1239.9H919.3V1241.5H925.9V1245.4H931.5V1247.6H942V1237.7H948.1V1244.9H955.8V1241.5H961.4V1243.8H969.7V1233.8H978V1203.3H981.3V1246.5H992.4V1243.8H1001.3V1241H1005.7V932.1H1011.8V1243.8H1027.9V1243H1042.2V1241.5H1051.1V1239.3H1053.3V1241.5H1062.2V1243.8H1072.1V1241.5H1078.2V1184H1083.8V1241.5H1089.9V1243.8H1100.4V1239.9H1106.5V1242.1H1116.5V1239.9H1118.7V1242.1H1130.9V1237.7H1136.4V1191.8H1142V1239.3H1147.5V1243.8H1158.6V1239.9H1164.1V1241.5H1194.1V1064H1199.6V1219.4H1205.7V1243.8H1217.4V1241.5H1221.8V1245.4H1229.4V1239.9H1235V1243.8H1246V1241.5H1252.7V1237.7H1257.2V1243.8H1273.8V1241.5H1286V1245.4H1303.8V1205.2H1308.2V1241.5H1318.1V1160.7H1322V1239.3H1332.5V1231.6H1338.1V1235.4H1343.6V1241.5H1354.2V1229.3H1359.7V1241H1365.8V1243.8H1375.8V1241.5H1384.6V1239.3H1395.7V1242.1H1417.9V1244.3H1426V1167.5H1434.4V1091.8H1439.6V1245.4H1447.7V1239.3H1453.3V1241.5H1460V1243.8H1469.9V1237.7H1475.4V1241.5H1484.3V1239.3H1489.8V1242.1H1500.9V1239.3H1504.3V1242.1H1514.2V1239.3H1519.8V1235.4H1527.8V1041.8H1533.9V969.8H1540.1V1185.2H1547.7V1238.2H1563.5V1225.4H1567.5V1243.8H1576.3V1246H1584.1V1241.5H1592.9V1239.3H1602.9V1243.8H1610.7V1245.4H1620V1235.6H1625.3V1239.2H1631.6V1244H1642.1V1241.3H1660V1244H1675.8V1241.9H1684.3V1233.4H1690.6V1231.9H1695.8V1243.5H1706.4V1240.8H1711.6V1207.6H1718V1243.5H1733.8V1241.3H1740.1V1223.4H1746.4V1245.6H1753.8V1239.2H1760.1V1242.4H1766.4V1247.7H1775.9V1243.5H1781" fill="none" stroke="#ffffff" stroke-width="3" stroke-linejoin="miter" stroke-miterlimit="10"/></svg>
</body></html>
